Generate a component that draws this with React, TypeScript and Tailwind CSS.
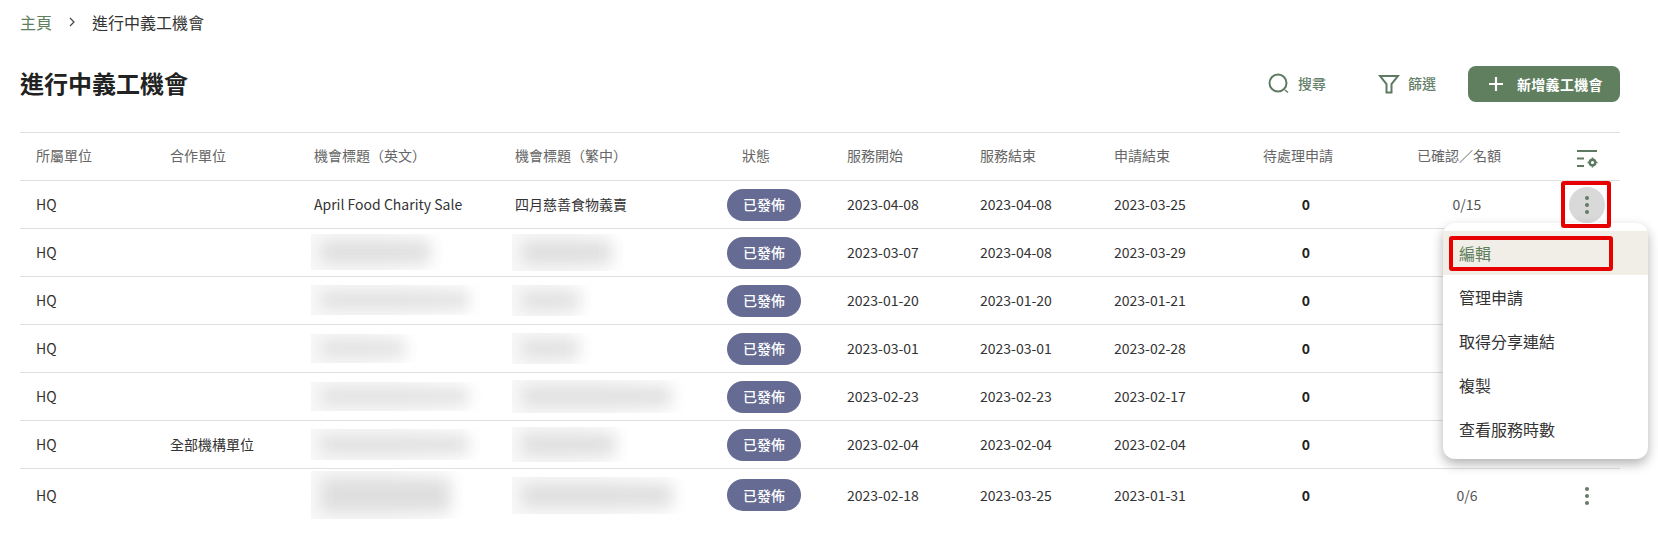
const font = '[font-family:"Noto_Sans_CJK_TC","Noto_Sans",sans-serif]';

const rows = [
  { partner: "", en: "April Food Charity Sale", zh: "四月慈善食物義賣", start: "2023-04-08", end: "2023-04-08", apply: "2023-03-25", quota: "0/15" },
  { partner: "", blurEn: "w-[133px] h-[36px]", blurZh: "w-[113px] h-[37px]", start: "2023-03-07", end: "2023-04-08", apply: "2023-03-29" },
  { partner: "", blurEn: "w-[171px] h-[30px]", blurZh: "w-[81px] h-[31px]", start: "2023-01-20", end: "2023-01-20", apply: "2023-01-21" },
  { partner: "", blurEn: "w-[107px] h-[29px]", blurZh: "w-[80px] h-[31px]", start: "2023-03-01", end: "2023-03-01", apply: "2023-02-28" },
  { partner: "", blurEn: "w-[171px] h-[29px]", blurZh: "w-[173px] h-[33px]", start: "2023-02-23", end: "2023-02-23", apply: "2023-02-17" },
  { partner: "全部機構單位", blurEn: "w-[171px] h-[31px]", blurZh: "w-[117px] h-[35px]", start: "2023-02-04", end: "2023-02-04", apply: "2023-02-04" },
  { partner: "", blurEn: "w-[153px] h-[48px]", blurZh: "w-[174px] h-[37px]", start: "2023-02-18", end: "2023-03-25", apply: "2023-01-31", quota: "0/6" },
];

function Blur({ size }: { size?: string }) {
  return (
    <div className={`${size} -ml-[3px] overflow-hidden bg-linear-to-r from-[#f8f8f8] via-[#f8f8f8] to-white py-[7px] pl-[10px] pr-[14px]`}>
      <div className="h-full w-full bg-[#dedede] blur-[8px]" />
    </div>
  );
}

function Dots() {
  return (
    <svg width="6" height="20" viewBox="0 0 6 20" fill="#667a6b">
      <circle cx="3" cy="3" r="2" />
      <circle cx="3" cy="10" r="2" />
      <circle cx="3" cy="17" r="2" />
    </svg>
  );
}

export default function App() {
  const th = "h-[48px] px-4 pb-[2px] text-left text-[14px] font-normal text-[#666]";
  const td = "px-4 pb-[1px] text-[14px] text-[#333]";
  return (
    <div className={`relative h-[536px] w-[1658px] overflow-hidden bg-white ${font}`}>
      <div className="flex h-[44px] items-center px-5 text-[16px] text-[#333]">
        <span className="text-[#5f7f5f]">主頁</span>
        <svg className="ml-[16px] mr-[16px]" width="8" height="10" viewBox="0 0 8 10" fill="none" stroke="#444" strokeWidth="1.2">
          <path d="M2 1l4 4-4 4" />
        </svg>
        <span>進行中義工機會</span>
      </div>

      <div className="mt-[22px] flex h-[36px] items-center pl-5 pr-[38px]">
        <h1 className="mb-[2px] text-[24px] font-bold text-[#222]">進行中義工機會</h1>
        <div className="ml-auto flex items-center text-[14px] font-medium text-[#667f6b]">
          <svg width="22" height="22" viewBox="0 0 22 22" fill="none" stroke="#5f7a63" strokeWidth="2">
            <circle cx="10" cy="10" r="8.5" />
            <path d="M17 17l3 2.5" strokeWidth="1.5" />
          </svg>
          <span className="mb-[2px] ml-[8px]">搜尋</span>
          <svg className="ml-[52px]" width="22" height="20" viewBox="0 0 22 20" fill="none" stroke="#5f7a63" strokeWidth="2">
            <path d="M2 2h18l-6.5 8v8.5h-5V10z" />
          </svg>
          <span className="mb-[2px] ml-[8px]">篩選</span>
          <button className="ml-[32px] flex h-[36px] w-[152px] items-center rounded-lg bg-[#5f7f5f] pl-[20px] text-[14px] font-bold tracking-[0.3px] text-white">
            <svg width="16" height="16" viewBox="0 0 16 16" stroke="#fff" strokeWidth="2.2">
              <path d="M8 1v14M1 8h14" />
            </svg>
            <span className="ml-[13px]">新增義工機會</span>
          </button>
        </div>
      </div>

      <div className="mx-5 mt-[30px]">
        <table className="w-[1600px] table-fixed border-collapse">
          <colgroup>
            <col className="w-[134px]" />
            <col className="w-[144px]" />
            <col className="w-[201px]" />
            <col className="w-[184px]" />
            <col className="w-[148px]" />
            <col className="w-[133px]" />
            <col className="w-[134px]" />
            <col className="w-[134px]" />
            <col className="w-[148px]" />
            <col className="w-[174px]" />
            <col className="w-[66px]" />
          </colgroup>
          <thead>
            <tr className="border-y border-[#e0e0e0]">
              <th className={th}>所屬單位</th>
              <th className={th}>合作單位</th>
              <th className={th}>機會標題（英文）</th>
              <th className={th}>機會標題（繁中）</th>
              <th className={`${th} !pr-[18px] !text-center`}>狀態</th>
              <th className={th}>服務開始</th>
              <th className={th}>服務結束</th>
              <th className={th}>申請結束</th>
              <th className={`${th} !pr-[32px] !text-center`}>待處理申請</th>
              <th className={`${th} !pr-[32px] !text-center`}>已確認／名額</th>
              <th className={th + " !px-0"}>
                <svg className="mx-auto mt-[6px]" width="22" height="18" viewBox="0 0 22 18" fill="none" stroke="#5f7a63" strokeWidth="1.8">
                  <path d="M1 1h20M1 8.5h7M1 16h7" />
                  <circle cx="16.5" cy="12.5" r="2.8" strokeWidth="2.4" />
                  <path d="M16.5 7.5v2M16.5 15.5v2M11.5 12.5h2M19.5 12.5h2" strokeWidth="1.6" />
                </svg>
              </th>
            </tr>
          </thead>
          <tbody>
            {rows.map((r, i) => (
              <tr key={i} className={i === rows.length - 1 ? "h-[54px]" : "h-[48px] border-b border-[#e0e0e0]"}>
                <td className={td}>HQ</td>
                <td className={td}>{r.partner}</td>
                <td className={td}>{r.en ?? <Blur size={r.blurEn} />}</td>
                <td className={td}>{r.zh ?? <Blur size={r.blurZh} />}</td>
                <td className={i === rows.length - 1 ? td : `${td} !pb-0`}>
                  <div className="ml-[28px] flex h-[32px] w-[74px] items-center justify-center rounded-full bg-[#666b93] text-[14px] font-medium text-white">已發佈</div>
                </td>
                <td className={td}>{r.start}</td>
                <td className={td}>{r.end}</td>
                <td className={td}>{r.apply}</td>
                <td className={`${td} text-center font-semibold !text-[#222]`}>0</td>
                <td className={`${td} text-center !text-[#555]`}>{r.quota}</td>
                <td className="px-0">
                  {(i === 0 || i === rows.length - 1) && (
                    <div className={`mx-auto flex h-[36px] w-[36px] items-center justify-center rounded-full ${i === 0 ? "bg-[#d9d9d9]" : ""}`}>
                      <Dots />
                    </div>
                  )}
                </td>
              </tr>
            ))}
          </tbody>
        </table>
      </div>

      <div className="absolute left-[1443px] top-[223px] w-[205px] rounded-xl bg-white py-2 text-[16px] text-[#333] shadow-[0_5px_12px_rgba(0,0,0,0.3)]">
        <div className="flex h-[44px] items-center bg-[#f0eee6] pl-[16px] text-[#5f7f5f]">編輯</div>
        <div className="flex h-[44px] items-center pl-[16px]">管理申請</div>
        <div className="flex h-[44px] items-center pl-[16px]">取得分享連結</div>
        <div className="flex h-[44px] items-center pl-[16px]">複製</div>
        <div className="flex h-[44px] items-center pl-[16px]">查看服務時數</div>
        <div className="absolute left-[6px] top-[13px] h-[35px] w-[164px] rounded-[3px] border-[4px] border-[#e60000]" />
      </div>

      {/* annotation box round the row menu button, sits over the menu's top edge */}
      <div className="absolute left-[1561px] top-[181px] h-[47px] w-[50px] rounded-[3px] border-[4px] border-[#e60000]" />
    </div>
  );
}
